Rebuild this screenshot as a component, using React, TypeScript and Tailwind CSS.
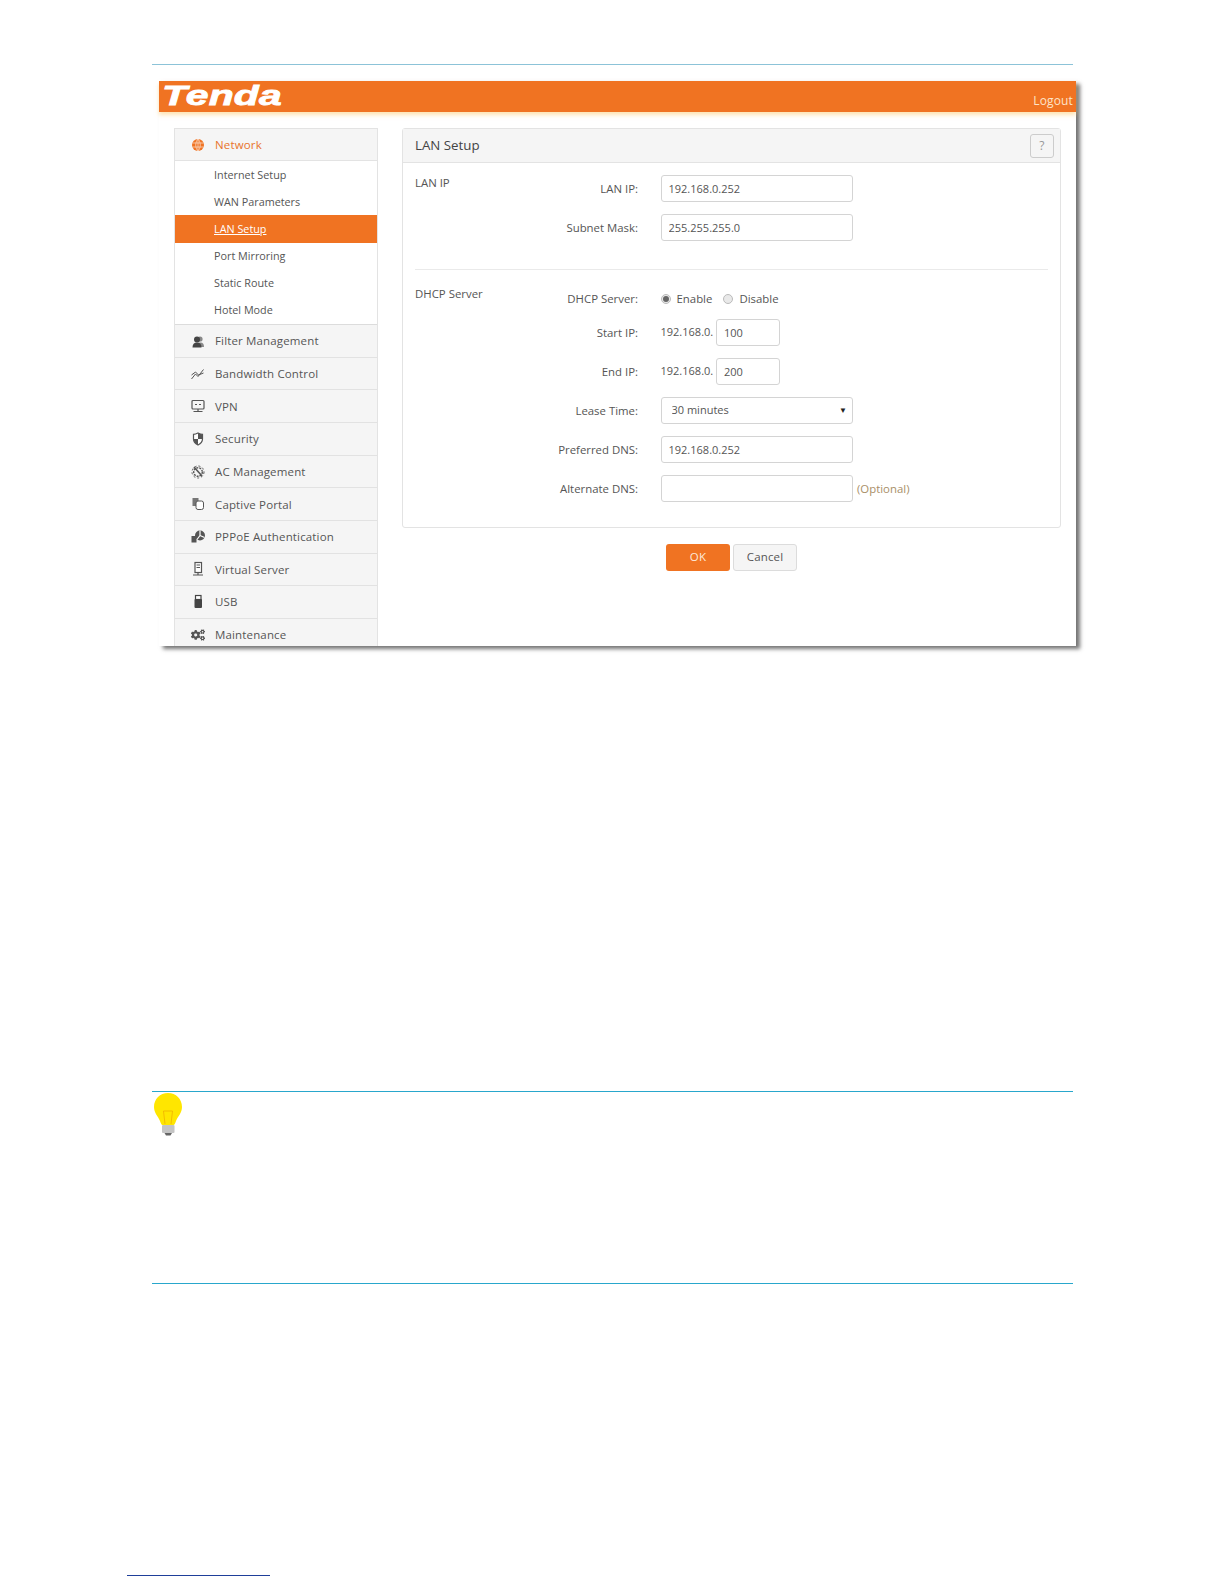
import React from 'react';
import { FaCogs } from 'react-icons/fa';

const I = ({ children, c = '#555' }: { children: React.ReactNode; c?: string }) => (
  <svg width="16" height="16" viewBox="0 0 16 16" fill="none" stroke={c} strokeWidth="1.2">{children}</svg>
);

const Globe = () => (
  <I c="#f07322"><circle cx="8" cy="8" r="6" fill="#f07322" stroke="none" /><path d="M2.5 6h11M2.5 10h11M8 2v12M8 2c-3 3-3 9 0 12M8 2c3 3 3 9 0 12" stroke="#fbe3d2" strokeWidth="0.7" /></I>
);
const Filter = () => <I><circle cx="10" cy="6" r="2.6" fill="#888" stroke="none" /><path d="M7 14c0-3 1-4.500 3.500-4.500S14 11 14 14z" fill="#888" stroke="none" /><circle cx="7" cy="6.500" r="3" fill="#444" stroke="none" /><path d="M2.500 14.500c0-3.500 1.500-5 4.500-5s4.500 1.500 4.500 5z" fill="#444" stroke="none" /></I>;
const Band = () => <I><path d="M1.5 13l4-5 2.5 2.5 5.5-7M1.5 9l4-3 3 3 5-2" strokeWidth="1" /></I>;
const Vpn = () => <I><rect x="2" y="2.5" width="12" height="8.5" rx="1" /><path d="M5 6.5h2M9 6.5h2M8 11v2M3.5 13.5h9" /></I>;
const Shield = () => <I><path d="M8 2c2 1 3.5 1.3 4.5 1.3V8c0 3-2.5 5-4.5 6-2-1-4.5-3-4.5-6V3.300C4.500 3.300 6 3 8 2z" fill="#fff" stroke="#555" /><path d="M8 2c2 1 3.500 1.300 4.500 1.300V8H8zM8 8H3.500c0 3 2.500 5 4.500 6z" fill="#555" stroke="none" /></I>;
const Ac = () => <I><circle cx="8" cy="8" r="4.3" strokeWidth="1.4" strokeDasharray="2 1" /><circle cx="8" cy="8" r="6" strokeWidth="1" strokeDasharray="2 2" /><path d="M4 3l8 9" strokeWidth="1.6" /></I>;
const Portal = () => <I><rect x="2.500" y="2" width="6" height="8" fill="#777" stroke="none" /><rect x="6" y="5" width="7.500" height="8.500" rx="2" fill="#fff" stroke="#555" strokeWidth="1" /></I>;
const Pppoe = () => <I><rect x="1.500" y="7" width="5" height="6.500" fill="#555" stroke="none" /><circle cx="10" cy="6.500" r="5" fill="#555" stroke="none" /><path d="M10 6.500V1.500M10 6.500l4.500 2M10 6.500l-3 4" stroke="#fff" /></I>;
const Srv = () => <I><rect x="5" y="1.500" width="6.500" height="10" fill="#fff" stroke="#555" /><path d="M6.500 4h3.500M6.500 6.500h3.500M8 11.500v2M3 14h10" /></I>;
const Usb = () => <I><rect x="4.500" y="5" width="7.500" height="9" rx="1" fill="#444" stroke="none" /><rect x="5.500" y="1.500" width="5.500" height="4" fill="#fff" stroke="#444" /></I>;

const subs = ['Internet Setup', 'WAN Parameters', 'LAN Setup', 'Port Mirroring', 'Static Route', 'Hotel Mode'];
const menu: [string, React.ReactNode][] = [
  ['Filter Management', <Filter />],
  ['Bandwidth Control', <Band />],
  ['VPN', <Vpn />],
  ['Security', <Shield />],
  ['AC Management', <Ac />],
  ['Captive Portal', <Portal />],
  ['PPPoE Authentication', <Pppoe />],
  ['Virtual Server', <Srv />],
  ['USB', <Usb />],
  ['Maintenance', <FaCogs className="text-[14px] text-[#555]" />],
];

const inputCls = 'h-[27px] rounded-[3px] border border-[#d4d4d4] bg-white px-[7px] text-[11px] tracking-normal text-[#555] outline-none';

const Row = ({ label, children, h = 'h-[27px]' }: { label: string; children: React.ReactNode; h?: string }) => (
  <div className={`flex items-center ${h}`}>
    <div className="mr-[22.5px] w-[133px] text-right text-[11.4px] tracking-normal text-[#555]">{label}</div>
    {children}
  </div>
);

const Radio = ({ on, label }: { on?: boolean; label: string }) => (
  <span className="flex items-center gap-[6px] text-[11.4px] tracking-normal">
    <span className="flex h-[10px] w-[10px] items-center justify-center rounded-full border border-[#bbb] bg-[#e9e9e9]">
      {on && <span className="h-[6px] w-[6px] rounded-full bg-[#666]" />}
    </span>
    <span className="text-[#555]">{label}</span>
  </span>
);

export default function App() {
  return (
    <div className="flex h-[1584px] w-[1224px] flex-col overflow-hidden bg-white font-['Open_Sans',sans-serif] text-[11.5px] tracking-[0.15px] text-[#555]">
      <div className="ml-[151.5px] mt-[64px] h-px w-[921.5px] bg-[#8cc3d8]" />

      <div className="ml-[159px] mt-[16px] flex h-[565px] w-[917px] flex-col bg-white shadow-[4px_3px_4px_rgba(0,0,0,0.55)]">
        <div className="flex h-[31px] shrink-0 items-end justify-between bg-[#f07322] shadow-[0_3px_4px_rgba(253,205,120,0.55)]">
          <svg width="126" height="31" viewBox="0 0 126 31" className="block">
            <text x="3" y="24" fontFamily="'Liberation Sans',sans-serif" fontWeight="700" fontStyle="italic" fontSize="28" fill="#fff" stroke="#fff" strokeWidth="0.8" textLength="120" lengthAdjust="spacingAndGlyphs">Tenda</text>
          </svg>
          <span className="mb-[2px] mr-[3px] text-[12px] text-[#fde3c8]">Logout</span>
        </div>

        <div className="flex min-h-0 flex-1 gap-[24px] overflow-hidden pl-[15px] pr-[15px] pt-[16px]">
          <aside className="w-[204px] shrink-0 border-x border-t border-[#e3e3e3]">
            <div className="flex h-[32px] items-center gap-[9px] border-b border-[#e3e3e3] bg-[#f5f5f5] pl-[15px] text-[#e8742c]">
              <Globe />
              <span>Network</span>
            </div>
            <div className="border-b border-[#dcdcdc] bg-white">
              {subs.map((s, i) => (
                <div
                  key={s}
                  className={`flex h-[27.2px] items-center pl-[39px] text-[10.8px] tracking-normal ${
                    i === 2 ? 'bg-[#f07322] text-white underline' : 'text-[#555]'
                  }`}
                >
                  {s}
                </div>
              ))}
            </div>
            {menu.map(([t, ic]) => (
              <div key={t} className="flex h-[32.65px] items-center border-b border-[#e2e2e2] bg-[#f5f5f5] pl-[15px]">
                <span className="mr-[9px] flex w-[16px] justify-center">{ic}</span>
                <span>{t}</span>
              </div>
            ))}
          </aside>

          <main className="min-w-0 flex-1">
            <section className="h-[399.5px] rounded-[3px] border border-[#e3e3e3]">
              <header className="flex h-[34px] items-center justify-between border-b border-[#e3e3e3] bg-[#f5f5f5] pl-[12px] pr-[6px]">
                <h2 className="text-[13.3px] font-medium tracking-normal text-[#444]">LAN Setup</h2>
                <button className="flex h-[24px] w-[24px] items-center justify-center rounded-[3px] border border-[#ccc] text-[12px] text-[#999]">?</button>
              </header>

              <div className="mx-[12px] flex border-b border-[#eaeaea] pb-[27.5px] pt-[12px]">
                <div className="w-[90px] text-[11.4px] leading-[16px] tracking-normal">LAN IP</div>
                <div className="flex flex-col gap-[12.2px]">
                  <Row label="LAN IP:"><input readOnly value="192.168.0.252" className={`${inputCls} w-[192.5px]`} /></Row>
                  <Row label="Subnet Mask:"><input readOnly value="255.255.255.0" className={`${inputCls} w-[192.5px]`} /></Row>
                </div>
              </div>

              <div className="mx-[12px] flex pt-[16px]">
                <div className="w-[90px] text-[11.4px] leading-[16px] tracking-normal">DHCP Server</div>
                <div className="flex flex-col gap-[12.2px] pt-[3px]">
                  <Row label="DHCP Server:" h="h-[20px] -mb-[2.2px]">
                    <div className="flex gap-[11px]"><Radio on label="Enable" /><Radio label="Disable" /></div>
                  </Row>
                  <Row label="Start IP:">
                    <span className="w-[55.5px] whitespace-nowrap text-[11px] tracking-normal">192.168.0.</span>
                    <input readOnly value="100" className={`${inputCls} w-[64px]`} />
                  </Row>
                  <Row label="End IP:">
                    <span className="w-[55.5px] whitespace-nowrap text-[11px] tracking-normal">192.168.0.</span>
                    <input readOnly value="200" className={`${inputCls} w-[64px]`} />
                  </Row>
                  <Row label="Lease Time:">
                    <div className="relative w-[192.5px]">
                      <select className={`${inputCls} w-full appearance-none pl-[10px]`} defaultValue="30 minutes"><option>30 minutes</option></select>
                      <span className="pointer-events-none absolute right-[6px] top-[8px] text-[8px] leading-[10px] text-[#222]">▼</span>
                    </div>
                  </Row>
                  <Row label="Preferred DNS:"><input readOnly value="192.168.0.252" className={`${inputCls} w-[192.5px]`} /></Row>
                  <Row label="Alternate DNS:">
                    <input readOnly value="" className={`${inputCls} w-[192.5px]`} />
                    <span className="ml-[4px] text-[11.4px] tracking-normal text-[#a98f68]">(Optional)</span>
                  </Row>
                </div>
              </div>
            </section>

            <div className="mt-[16px] flex justify-center gap-[3px]">
              <button className="h-[27px] w-[64px] rounded-[3px] bg-[#f07322] text-[#fde9da]">OK</button>
              <button className="h-[27px] w-[64px] rounded-[3px] border border-[#dcdcdc] bg-[#f5f5f5] text-[#555]">Cancel</button>
            </div>
          </main>
        </div>
      </div>

      <div className="ml-[151.5px] mt-[445px] h-px w-[921.5px] bg-[#29a7cc]" />
      <div className="ml-[151.5px] h-[191px] w-[921.5px]">
        <svg width="30" height="43" viewBox="0 0 30 43" className="ml-[2px] mt-px block">
          <path d="M14 0C6 0 0 6 0 14c0 6 4 9 6 14 .7 2 1.500 4 2.500 4h11c1 0 1.800-2 2.500-4 2-5 6-8 6-14C28 6 22 0 14 0z" fill="#ffe600" />
          <path d="M11 31l-1.500-13h9L17 31" fill="none" stroke="#f0b000" strokeWidth="0.8" />
          <rect x="8" y="32" width="12.500" height="8" rx="1" fill="#c4c4c4" />
          <path d="M10.500 40h7.500l-1.500 2.500h-4.500z" fill="#666" />
        </svg>
      </div>
      <div className="ml-[151.5px] h-px w-[921.5px] bg-[#29a7cc]" />
      <div className="ml-[127px] mt-[291px] h-px w-[143px] bg-[#1f3f9a]" />
    </div>
  );
}
